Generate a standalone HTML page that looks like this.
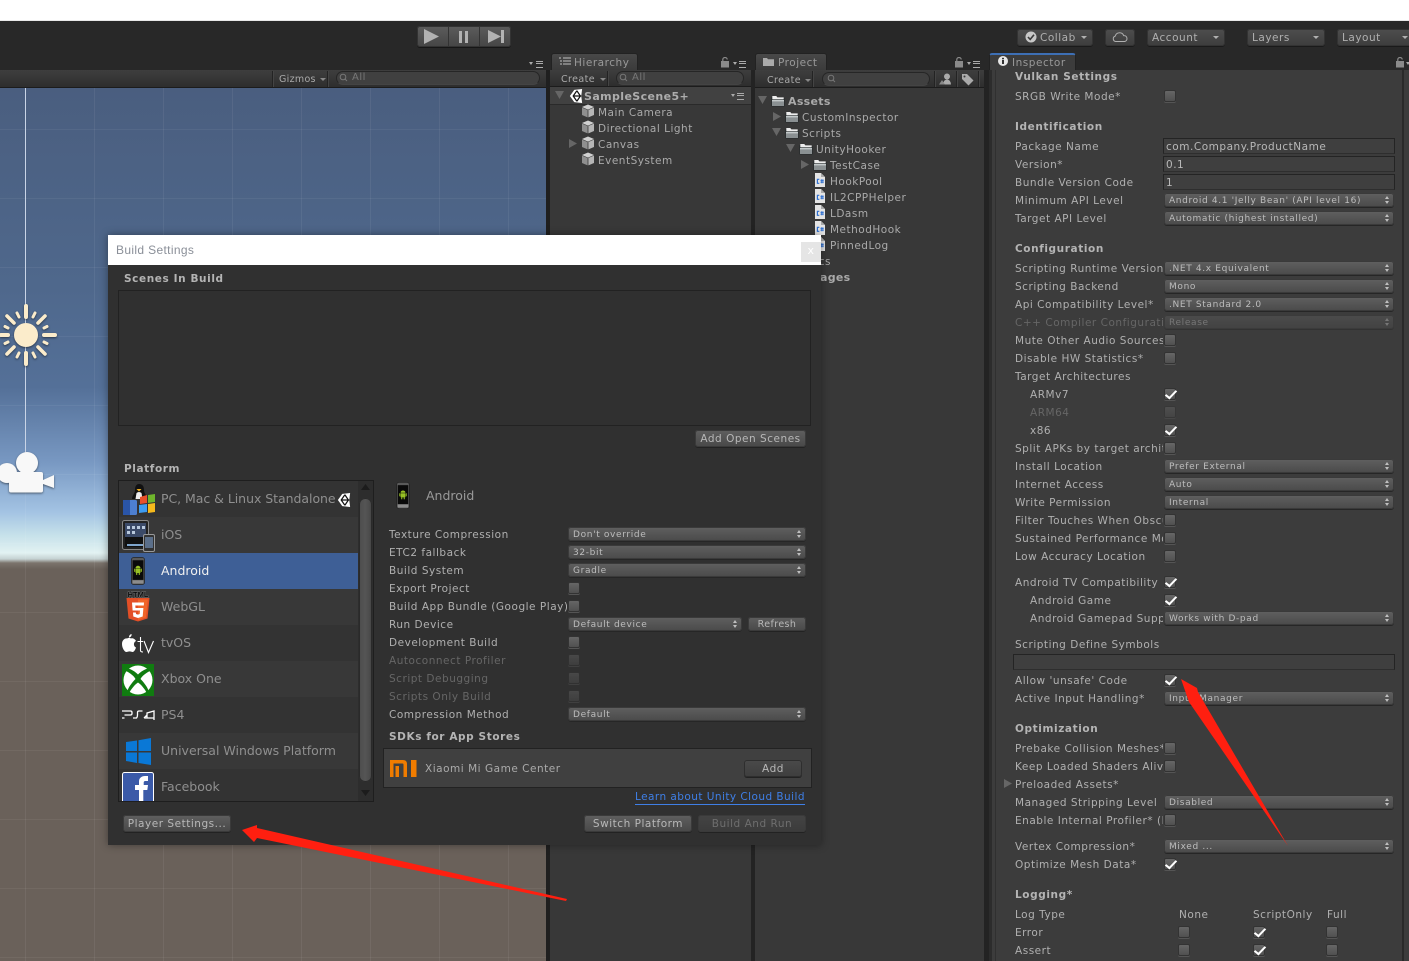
<!DOCTYPE html>
<html><head><meta charset="utf-8"><title>Build Settings</title>
<style>
html,body{margin:0;padding:0;width:1409px;height:961px;overflow:hidden;background:#282828}
body{position:relative;font:10.5px/16px "DejaVu Sans","Liberation Sans",sans-serif;color:#b0b0b0;letter-spacing:.52px}
div,svg,a{position:absolute}
.l,.b,.s{white-space:nowrap;height:16px;margin-top:1px}
.b{font-weight:bold;font-size:10.5px;color:#b4b4b4;letter-spacing:.6px}
.c{width:148px;overflow:hidden}
.ci{width:133px;overflow:hidden}
.dis{color:#666}
.dd{height:14px;border-radius:3px;background:linear-gradient(#606060,#4a4a4a);box-shadow:0 1px 0 #262626,inset 0 0 0 1px #3a3a3a;font-size:9px;line-height:16px;color:#bdbdbd;padding-left:5px;box-sizing:border-box;white-space:nowrap;letter-spacing:.65px}
.dd::before,.dd::after{content:"";position:absolute;right:5px;border-left:2.5px solid transparent;border-right:2.5px solid transparent}
.dd::before{top:3px;border-bottom:3px solid #c0c0c0}
.dd::after{top:8px;border-top:3px solid #c0c0c0}
.ddo{opacity:.45}
.i{left:1164px;width:230px}
.g{left:568px;width:238px}
.cb{width:12px;height:12px;box-sizing:border-box;border-radius:2px;background:linear-gradient(#666,#505050);border:1px solid #333;box-shadow:0 1px 0 #555}
.cd{opacity:.45}
.ck{margin-top:-1px}
.ck::after{content:"";position:absolute;left:3px;top:-1px;width:4px;height:9px;border-right:2.4px solid #fff;border-bottom:2.4px solid #fff;transform:rotate(38deg) skewX(-6deg)}
.tf{left:1163px;width:232px;height:16px;box-sizing:border-box;background:#3f3f3f;border:1px solid #242424;border-bottom-color:#2e2e2e;padding-left:2px;line-height:16px;color:#b8b8b8}
.btn{height:17px;box-sizing:border-box;border-radius:3px;background:linear-gradient(#5f5f5f,#484848);box-shadow:0 1px 0 #222,inset 0 0 0 1px #3a3a3a;text-align:center;line-height:18px;color:#b8b8b8;white-space:nowrap}
.tb{height:17px;top:29px;box-sizing:border-box;border-radius:3px;background:linear-gradient(#4e4e4e,#3d3d3d);box-shadow:0 1px 0 #1a1a1a,inset 0 0 0 1px #333;line-height:18px;padding-left:5px;color:#b0b0b0;white-space:nowrap}
.ar{width:0;height:0;border-left:3px solid transparent;border-right:3px solid transparent;border-top:3px solid #b0b0b0}
.tool{background:linear-gradient(#3e3e3e,#2e2e2e);border-bottom:1px solid #1c1c1c;box-sizing:border-box}
.sp{width:1px;background:#232323;box-shadow:1px 0 0 #444}
.pill{height:14px;border-radius:7px;background:#404040;border:1px solid #262626;box-sizing:border-box;color:#777;font-size:10px;line-height:12px;border-bottom-color:#444}
.tab{top:53px;height:17px;box-sizing:border-box;border-radius:3px 3px 0 0;background:linear-gradient(#484848,#3b3b3b);border:1px solid #222;border-bottom:0;color:#999;line-height:18px;white-space:nowrap}
.m{width:7px;height:5px;border-top:1px solid #aaa;border-bottom:1px solid #aaa}
.m::after{content:"";position:absolute;left:0;right:0;top:1px;height:1px;background:#aaa;box-shadow:0 0 0 #aaa}
.mt{width:0;height:0;border-left:2.5px solid transparent;border-right:2.5px solid transparent;border-top:3px solid #aaa}
.row{left:119px;width:239px;height:36px}
.pt{left:161px;font-size:12.5px;line-height:18px;color:#8f8f8f;white-space:nowrap;height:18px;letter-spacing:0}
.tree{color:#aaa;letter-spacing:.5px}
</style></head><body>
<svg width="0" height="0" style="left:0;top:0"><defs>
<symbol id="cube" viewBox="0 0 14 14"><path d="M7 .5 13 3 7 5.6 1 3z" fill="#d0d0d0"/><path d="M1 3.600 6.600 6v7.400L1 11z" fill="#8f8f8f"/><path d="M13 3.600 7.400 6v7.400L13 11z" fill="#b5b5b5"/></symbol>
<symbol id="fold" viewBox="0 0 14 12"><path d="M.5 2.200h5l1 1.200h7v8h-13z" fill="#1e2426"/><path d="M1.300 1h4l1 1.400h6.400v2H1.300z" fill="#eee"/><path d="M1 5h12v6H1z" fill="#8a9092"/><path d="M1 5h12v1.400H1z" fill="#c3c9ca"/></symbol>
<symbol id="cs" viewBox="0 0 10 14"><path d="M0 0h6l4 4v10H0z" fill="#e4e4e4"/><path d="M6 0l4 4H6z" fill="#aaa"/><rect x="0" y="4.500" width="9" height="7.500" fill="#e4e4e4"/><path d="M4.300 6.300H2.400v4h1.900" fill="none" stroke="#2e6fd0" stroke-width="1.200"/><path d="M5.500 7.600h3.200M5.500 9.200h3.200M6.300 6.300v4M7.900 6.300v4" stroke="#2e6fd0" stroke-width=".9"/></symbol>
<symbol id="unity" viewBox="0 0 16 16"><path d="M1 8 6 1l9-1-1 8 1 8-9-1z" fill="#fff"/><path d="M9 2 4.800 8l4.200 6M9 8h5M4.800 8H9M9 2l4 6-4 6" fill="none" stroke="#111" stroke-width="1.400"/></symbol>
<symbol id="droid" viewBox="0 0 16 30"><rect x="1" y=".5" width="14" height="29" rx="2.500" fill="#5a5a5a" stroke="#222" stroke-width=".8"/><rect x="2.200" y="3.500" width="11.600" height="21" fill="#0a0a0a"/><rect x="2.200" y="25" width="11.600" height="3.400" fill="#8c8c8c"/><path d="M5.300 12a2.700 2.600 0 0 1 5.400 0z" fill="#97c024"/><rect x="5.300" y="12.500" width="5.400" height="4.600" rx=".6" fill="#97c024"/><rect x="3.900" y="12.500" width="1" height="3.400" fill="#97c024"/><rect x="11.100" y="12.500" width="1" height="3.400" fill="#97c024"/><rect x="6" y="17" width="1.200" height="2.200" fill="#97c024"/><rect x="8.800" y="17" width="1.200" height="2.200" fill="#97c024"/></symbol>
</defs></svg>

<!-- top strip -->
<div style="left:0;top:0;width:1409px;height:20px;background:#fff"></div>
<div style="left:0;top:20px;width:1409px;height:1px;background:#e8e8e8"></div>

<!-- play buttons -->
<div style="left:417px;top:26px;width:94px;height:21px;border-radius:3px;background:linear-gradient(#5c5c5c,#454545);box-shadow:0 1px 0 #161616,inset 0 0 0 1px #333"></div>
<div style="left:448px;top:27px;width:1px;height:20px;background:#333"></div>
<div style="left:479px;top:27px;width:1px;height:20px;background:#333"></div>
<svg style="left:417px;top:26px" width="94" height="21"><path d="M7 3 22 10.500 7 18z" fill="#b2b2b2"/><path d="M42 5h3v12h-3zM48 5h3v12h-3z" fill="#b2b2b2"/><path d="M71 4 84 10.500 71 17z" fill="#b2b2b2"/><rect x="84" y="4" width="3" height="13" fill="#b2b2b2"/></svg>

<!-- right toolbar -->
<div class="tb" style="left:1017px;width:76px;padding-left:23px">Collab</div>
<svg style="left:1025px;top:31px" width="12" height="12"><circle cx="6" cy="6" r="5.500" fill="#c8c8c8"/><path d="M3 6l2.200 2.400L9 3.800" fill="none" stroke="#3c3c3c" stroke-width="1.600"/></svg>
<div class="ar" style="left:1081px;top:36px"></div>
<div class="tb" style="left:1105px;width:30px"></div>
<svg style="left:1112px;top:31px" width="16" height="12"><path d="M3.500 10.500a2.800 2.800 0 0 1-.3-5.400 4.500 4.500 0 0 1 8.500-.5 3 3 0 0 1 1 5.900z" fill="none" stroke="#b0b0b0"/></svg>
<div class="tb" style="left:1147px;width:78px">Account</div><div class="ar" style="left:1213px;top:36px"></div>
<div class="tb" style="left:1247px;width:78px">Layers</div><div class="ar" style="left:1313px;top:36px"></div>
<div class="tb" style="left:1337px;width:78px">Layout</div><div class="ar" style="left:1402px;top:36px"></div>

<!-- scene view -->
<div style="left:0;top:87px;width:546px;height:874px;overflow:hidden;background:linear-gradient(#4a5e7f 0,#4f688c 200px,#547098 300px,#7898c2 375px,#a3c3e3 425px,#c6e1ea 448px,#e2f2f2 466px,#c5d2d2 472px,#7b736c 476px,#6a615a 482px)">
<div style="left:0;top:0;width:546px;height:874px;background-image:linear-gradient(90deg,rgba(255,255,255,.06) 1px,transparent 1px),linear-gradient(rgba(255,255,255,.05) 1px,transparent 1px);background-size:69px 69px;background-position:25px 42px"></div>
<div style="left:25px;top:0;width:1px;height:385px;background:#c9d4e6"></div>
</div>
<svg style="left:0;top:300px;filter:drop-shadow(0 1px 1px rgba(0,0,0,.5))" width="60" height="70"><g fill="#fbeccb" stroke="#fbeccb" stroke-linecap="round"><circle cx="26" cy="35" r="11.500"/><g stroke-width="4"><path d="M26 17V6M26 53v11M8 35H1M44 35H55"/></g><g stroke-width="3.600"><path d="M14 23 7 16M38 23 45 16M14 47 7 54M38 47 45 54"/></g><g stroke-width="3"><path d="M19 17 17 13M33 17 35 13M19 53 17 57M33 53 35 57M8 28 5 26.500M44 28 47 26.500M8 42 5 43.500M44 42 47 43.500"/></g></g></svg>
<svg style="left:0;top:450px;filter:drop-shadow(0 1px 1px rgba(0,0,0,.5))" width="58" height="46"><g fill="#f8f8f8"><circle cx="27" cy="13" r="11"/><circle cx="7" cy="23" r="10"/><rect x="9" y="22" width="34" height="20.500" rx="2"/><path d="M43 30 54 25V38L43 34z"/></g></svg>

<!-- docks -->
<div style="left:546px;top:70px;width:4px;height:891px;background:#1f1f1f"></div>
<div style="left:550px;top:70px;width:201px;height:891px;background:#383838"></div>
<div style="left:751px;top:70px;width:4px;height:891px;background:#232323"></div>
<div style="left:755px;top:70px;width:229px;height:891px;background:#383838"></div>
<div style="left:984px;top:70px;width:5px;height:891px;background:#232323"></div>
<div style="left:989px;top:70px;width:420px;height:891px;background:#3c3c3c"></div>
<div style="left:989px;top:70px;width:3px;height:891px;background:#2c2c2c"></div>
<div style="left:995px;top:70px;width:1px;height:891px;background:#303030"></div>
<div style="left:1402px;top:70px;width:2px;height:891px;background:#2a2a2a"></div>

<!-- scene toolbar -->
<div class="tool" style="left:0;top:70px;width:546px;height:18px"></div>
<div class="sp" style="left:272px;top:71px;height:16px"></div><div class="sp" style="left:327px;top:71px;height:16px"></div>
<div class="s" style="left:279px;top:71px;font-size:9.500px;color:#aaa;letter-spacing:.3px">Gizmos</div><div class="ar" style="left:320px;top:78px;border-top-color:#888"></div>
<div class="pill" style="left:336px;top:71px;width:204px;padding-left:15px">All</div>
<div class="mt" style="left:529px;top:62px"></div><div class="m" style="left:536px;top:61px"></div>

<!-- hierarchy -->
<div class="tab" style="left:551px;width:87px;padding-left:22px">Hierarchy</div>
<svg style="left:559px;top:57px" width="12" height="9"><path d="M0 1h2M4 1h8M1 4h2M4 4h8M1 7h2M4 7h8" stroke="#c0c0c0"/></svg>
<svg style="left:721px;top:57px" width="9" height="11"><rect x="0" y="4" width="8" height="6.500" fill="#8a8a8a"/><path d="M1.800 4V2.500a2.200 2 0 0 1 4.400 0" fill="none" stroke="#8a8a8a" stroke-width="1.200"/></svg>
<div class="mt" style="left:733px;top:62px"></div><div class="m" style="left:739px;top:61px"></div>
<div class="tool" style="left:550px;top:70px;width:201px;height:17px"></div>
<div class="sp" style="left:607px;top:71px;height:15px"></div>
<div class="s" style="left:561px;top:71px;font-size:9.500px;letter-spacing:.4px;color:#aaa">Create</div><div class="ar" style="left:600px;top:78px;border-top-color:#888"></div>
<div class="pill" style="left:616px;top:71px;width:128px;padding-left:15px">All</div>
<svg style="left:339px;top:73px" width="12" height="10"><circle cx="4" cy="4" r="2.800" fill="none" stroke="#777"/><path d="M6 6l2 2" stroke="#777"/></svg>
<svg style="left:619px;top:73px" width="12" height="10"><circle cx="4" cy="4" r="2.800" fill="none" stroke="#777"/><path d="M6 6l2 2" stroke="#777"/></svg>
<div style="left:550px;top:87px;width:201px;height:17px;background:#414141;border-bottom:1px solid #2a2a2a"></div>
<svg style="left:555px;top:91px" width="10" height="9"><path d="M0 0h9L4.500 8z" fill="#666"/></svg>
<svg style="left:569px;top:89px" width="14" height="14"><use href="#unity"/></svg>
<div class="b" style="left:584px;top:88px;font-size:11px;letter-spacing:.4px;color:#adadad">SampleScene5+</div>
<div class="mt" style="left:731px;top:94px"></div><div class="m" style="left:737px;top:93px"></div>
<svg style="left:581px;top:104px" width="14" height="14"><use href="#cube"/></svg><div class="l tree" style="left:598px;top:104px">Main Camera</div>
<svg style="left:581px;top:120px" width="14" height="14"><use href="#cube"/></svg><div class="l tree" style="left:598px;top:120px">Directional Light</div>
<svg style="left:569px;top:139px" width="9" height="10"><path d="M0 0 8 4.500 0 9z" fill="#666"/></svg>
<svg style="left:581px;top:136px" width="14" height="14"><use href="#cube"/></svg><div class="l tree" style="left:598px;top:136px">Canvas</div>
<svg style="left:581px;top:152px" width="14" height="14"><use href="#cube"/></svg><div class="l tree" style="left:598px;top:152px">EventSystem</div>

<!-- project -->
<div class="tab" style="left:755px;width:72px;padding-left:22px">Project</div>
<svg style="left:763px;top:57px" width="12" height="9"><path d="M0 1h4l1 1.200h6V9H0z" fill="#aaa"/></svg>
<svg style="left:955px;top:57px" width="9" height="11"><rect x="0" y="4" width="8" height="6.500" fill="#8a8a8a"/><path d="M1.800 4V2.500a2.200 2 0 0 1 4.400 0" fill="none" stroke="#8a8a8a" stroke-width="1.200"/></svg>
<div class="mt" style="left:967px;top:62px"></div><div class="m" style="left:973px;top:61px"></div>
<div class="tool" style="left:755px;top:70px;width:229px;height:18px"></div>
<div class="sp" style="left:812px;top:71px;height:16px"></div><div class="sp" style="left:934px;top:71px;height:16px"></div><div class="sp" style="left:956px;top:71px;height:16px"></div><div class="sp" style="left:978px;top:71px;height:16px"></div>
<div class="s" style="left:767px;top:72px;font-size:9.500px;letter-spacing:.4px;color:#aaa">Create</div><div class="ar" style="left:805px;top:79px;border-top-color:#888"></div>
<div class="pill" style="left:822px;top:72px;width:108px"></div>
<svg style="left:827px;top:74px" width="12" height="10"><circle cx="4" cy="4" r="2.800" fill="none" stroke="#777"/><path d="M6 6l2 2" stroke="#777"/></svg>
<svg style="left:939px;top:73px" width="14" height="13"><circle cx="8" cy="3.500" r="3" fill="#aaa"/><path d="M4 11.500q.5-5 4-5t4 5z" fill="#aaa"/><path d="M0 11.500 3 7l3 4.500z" fill="#888"/></svg>
<svg style="left:961px;top:73px" width="13" height="13"><path d="M1 1h5l6.500 6.500-5 5L1 6z" fill="#aaa"/><circle cx="3.500" cy="3.500" r="1" fill="#383838"/></svg>
<svg style="left:758px;top:96px" width="10" height="9"><path d="M0 0h9L4.500 8z" fill="#666"/></svg>
<svg style="left:771px;top:95px" width="14" height="12"><use href="#fold"/></svg><div class="b" style="left:788px;top:93px;font-size:11px;letter-spacing:.3px;color:#aaa">Assets</div>
<svg style="left:773px;top:112px" width="9" height="10"><path d="M0 0 8 4.500 0 9z" fill="#666"/></svg>
<svg style="left:785px;top:111px" width="14" height="12"><use href="#fold"/></svg><div class="l tree" style="left:802px;top:109px">CustomInspector</div>
<svg style="left:772px;top:128px" width="10" height="9"><path d="M0 0h9L4.500 8z" fill="#666"/></svg>
<svg style="left:785px;top:127px" width="14" height="12"><use href="#fold"/></svg><div class="l tree" style="left:802px;top:125px">Scripts</div>
<svg style="left:786px;top:144px" width="10" height="9"><path d="M0 0h9L4.500 8z" fill="#666"/></svg>
<svg style="left:799px;top:143px" width="14" height="12"><use href="#fold"/></svg><div class="l tree" style="left:816px;top:141px">UnityHooker</div>
<svg style="left:801px;top:160px" width="9" height="10"><path d="M0 0 8 4.500 0 9z" fill="#666"/></svg>
<svg style="left:813px;top:159px" width="14" height="12"><use href="#fold"/></svg><div class="l tree" style="left:830px;top:157px">TestCase</div>
<svg style="left:815px;top:173px" width="10" height="14"><use href="#cs"/></svg><div class="l tree" style="left:830px;top:173px">HookPool</div>
<svg style="left:815px;top:189px" width="10" height="14"><use href="#cs"/></svg><div class="l tree" style="left:830px;top:189px">IL2CPPHelper</div>
<svg style="left:815px;top:205px" width="10" height="14"><use href="#cs"/></svg><div class="l tree" style="left:830px;top:205px">LDasm</div>
<svg style="left:815px;top:221px" width="10" height="14"><use href="#cs"/></svg><div class="l tree" style="left:830px;top:221px">MethodHook</div>
<svg style="left:815px;top:237px" width="10" height="14"><use href="#cs"/></svg><div class="l tree" style="left:830px;top:237px">PinnedLog</div>
<div class="l tree" style="left:821px;top:253px;width:10px;overflow:hidden;direction:rtl">cs</div>
<div class="b" style="left:820px;top:269px;font-size:11px;letter-spacing:.3px;color:#aaa">ages</div>

<!-- inspector tab -->
<div class="tab" style="left:989px;width:87px;padding-left:22px;background:#3c3c3c;border-top:2px solid #3d6fb5;line-height:17px">Inspector</div>
<svg style="left:998px;top:56px" width="10" height="10"><circle cx="5" cy="5" r="5" fill="#e8e8e8"/><rect x="4" y="4" width="2" height="4" fill="#333"/><rect x="4" y="1.800" width="2" height="1.500" fill="#333"/></svg>
<svg style="left:1396px;top:57px" width="9" height="11"><rect x="0" y="4" width="8" height="6.500" fill="#8a8a8a"/><path d="M1.800 4V2.500a2.200 2 0 0 1 4.400 0" fill="none" stroke="#8a8a8a" stroke-width="1.200"/></svg>
<div class="mt" style="left:1406px;top:62px"></div>

<!-- inspector body -->
<div class="b" style="left:1015px;top:68px">Vulkan Settings</div>
<div class="l c" style="left:1015px;top:88px">SRGB Write Mode*</div><div class="cb" style="left:1164px;top:90px"></div>
<div class="b" style="left:1015px;top:118px">Identification</div>
<div class="l c" style="left:1015px;top:138px">Package Name</div><div class="tf" style="top:138px">com.Company.ProductName</div>
<div class="l c" style="left:1015px;top:156px">Version*</div><div class="tf" style="top:156px">0.1</div>
<div class="l c" style="left:1015px;top:174px">Bundle Version Code</div><div class="tf" style="top:174px">1</div>
<div class="l c" style="left:1015px;top:192px">Minimum API Level</div><div class="dd i" style="top:193px">Android 4.1 'Jelly Bean' (API level 16)</div>
<div class="l c" style="left:1015px;top:210px">Target API Level</div><div class="dd i" style="top:211px">Automatic (highest installed)</div>
<div class="b" style="left:1015px;top:240px">Configuration</div>
<div class="l c" style="left:1015px;top:260px">Scripting Runtime Version</div><div class="dd i" style="top:261px">.NET 4.x Equivalent</div>
<div class="l c" style="left:1015px;top:278px">Scripting Backend</div><div class="dd i" style="top:279px">Mono</div>
<div class="l c" style="left:1015px;top:296px">Api Compatibility Level*</div><div class="dd i" style="top:297px">.NET Standard 2.0</div>
<div class="l c dis" style="left:1015px;top:314px">C++ Compiler Configuration</div><div class="dd i ddo" style="top:315px">Release</div>
<div class="l c" style="left:1015px;top:332px">Mute Other Audio Sources</div><div class="cb" style="left:1164px;top:334px"></div>
<div class="l c" style="left:1015px;top:350px">Disable HW Statistics*</div><div class="cb" style="left:1164px;top:352px"></div>
<div class="l c" style="left:1015px;top:368px">Target Architectures</div>
<div class="l ci" style="left:1030px;top:386px">ARMv7</div><div class="cb ck" style="left:1164px;top:389px"></div>
<div class="l ci dis" style="left:1030px;top:404px">ARM64</div><div class="cb cd" style="left:1164px;top:406px"></div>
<div class="l ci" style="left:1030px;top:422px">x86</div><div class="cb ck" style="left:1164px;top:425px"></div>
<div class="l c" style="left:1015px;top:440px">Split APKs by target architecture</div><div class="cb" style="left:1164px;top:442px"></div>
<div class="l c" style="left:1015px;top:458px">Install Location</div><div class="dd i" style="top:459px">Prefer External</div>
<div class="l c" style="left:1015px;top:476px">Internet Access</div><div class="dd i" style="top:477px">Auto</div>
<div class="l c" style="left:1015px;top:494px">Write Permission</div><div class="dd i" style="top:495px">Internal</div>
<div class="l c" style="left:1015px;top:512px">Filter Touches When Obscured</div><div class="cb" style="left:1164px;top:514px"></div>
<div class="l c" style="left:1015px;top:530px">Sustained Performance Mode</div><div class="cb" style="left:1164px;top:532px"></div>
<div class="l c" style="left:1015px;top:548px">Low Accuracy Location</div><div class="cb" style="left:1164px;top:550px"></div>
<div class="l c" style="left:1015px;top:574px">Android TV Compatibility</div><div class="cb ck" style="left:1164px;top:577px"></div>
<div class="l ci" style="left:1030px;top:592px">Android Game</div><div class="cb ck" style="left:1164px;top:595px"></div>
<div class="l ci" style="left:1030px;top:610px">Android Gamepad Support</div><div class="dd i" style="top:611px">Works with D-pad</div>
<div class="l c" style="left:1015px;top:636px">Scripting Define Symbols</div>
<div class="tf" style="left:1013px;top:654px;width:382px"></div>
<div class="l c" style="left:1015px;top:672px">Allow 'unsafe' Code</div><div class="cb ck" style="left:1164px;top:675px"></div>
<div class="l c" style="left:1015px;top:690px">Active Input Handling*</div><div class="dd i" style="top:691px">Input Manager</div>
<div class="b" style="left:1015px;top:720px">Optimization</div>
<div class="l c" style="left:1015px;top:740px">Prebake Collision Meshes*</div><div class="cb" style="left:1164px;top:742px"></div>
<div class="l c" style="left:1015px;top:758px">Keep Loaded Shaders Alive*</div><div class="cb" style="left:1164px;top:760px"></div>
<svg style="left:1004px;top:779px" width="9" height="10"><path d="M0 0 8 4.500 0 9z" fill="#666"/></svg>
<div class="l c" style="left:1015px;top:776px">Preloaded Assets*</div>
<div class="l c" style="left:1015px;top:794px">Managed Stripping Level</div><div class="dd i" style="top:795px">Disabled</div>
<div class="l c" style="left:1015px;top:812px">Enable Internal Profiler* (Deprecated)</div><div class="cb" style="left:1164px;top:814px"></div>
<div class="l c" style="left:1015px;top:838px">Vertex Compression*</div><div class="dd i" style="top:839px">Mixed ...</div>
<div class="l c" style="left:1015px;top:856px">Optimize Mesh Data*</div><div class="cb ck" style="left:1164px;top:859px"></div>
<div class="b" style="left:1015px;top:886px">Logging*</div>
<div class="l" style="left:1015px;top:906px">Log Type</div><div class="l" style="left:1179px;top:906px">None</div><div class="l" style="left:1253px;top:906px">ScriptOnly</div><div class="l" style="left:1327px;top:906px">Full</div>
<div class="l" style="left:1015px;top:924px">Error</div><div class="cb" style="left:1178px;top:926px"></div><div class="cb ck" style="left:1253px;top:927px"></div><div class="cb" style="left:1326px;top:926px"></div>
<div class="l" style="left:1015px;top:942px">Assert</div><div class="cb" style="left:1178px;top:944px"></div><div class="cb ck" style="left:1253px;top:945px"></div><div class="cb" style="left:1326px;top:944px"></div>

<!-- build settings dialog -->
<div style="left:108px;top:235px;width:713px;height:610px;background:#303030;box-shadow:0 0 8px rgba(0,0,0,.4)"></div>
<div style="left:108px;top:235px;width:713px;height:30px;background:#fff"></div>
<div class="s" style="left:116px;top:241px;font:12px/16px 'Liberation Sans',sans-serif;color:#8a8f98;letter-spacing:.35px">Build Settings</div>
<div style="left:801px;top:242px;width:20px;height:20px;background:#e5e5e5;color:#fff;text-align:center;line-height:18px;font-size:11px">x</div>
<div class="b" style="left:124px;top:270px">Scenes In Build</div>
<div style="left:118px;top:290px;width:693px;height:136px;box-sizing:border-box;border:1px solid #222"></div>
<div class="btn" style="left:695px;top:430px;width:111px">Add Open Scenes</div>
<div class="b" style="left:124px;top:460px">Platform</div>

<!-- platform list -->
<div style="left:118px;top:480px;width:256px;height:322px;box-sizing:border-box;border:1px solid #1e1e1e;background:#333"></div>
<div class="row" style="top:481px;background:#333"></div>
<div class="row" style="top:517px;background:#383838"></div>
<div class="row" style="top:553px;background:#3e5f96"></div>
<div class="row" style="top:589px;background:#383838"></div>
<div class="row" style="top:625px;background:#333"></div>
<div class="row" style="top:661px;background:#383838"></div>
<div class="row" style="top:697px;background:#333"></div>
<div class="row" style="top:733px;background:#383838"></div>
<div class="row" style="top:769px;height:32px;background:#333"></div>
<div style="left:358px;top:481px;width:15px;height:320px;background:#2d2d2d"></div>
<svg style="left:361px;top:484px" width="9" height="6"><path d="M4.500 0 9 6H0z" fill="#1c1c1c"/></svg>
<svg style="left:361px;top:790px" width="9" height="6"><path d="M4.500 6 9 0H0z" fill="#1c1c1c"/></svg>
<div style="left:359px;top:498px;width:13px;height:284px;border-radius:6px;background:linear-gradient(90deg,#4c4c4c,#555 50%,#454545);box-shadow:inset 0 0 0 1px #2a2a2a"></div>
<div class="pt" style="top:490px;letter-spacing:-.04px">PC, Mac &amp; Linux Standalone</div>
<svg style="left:337px;top:493px" width="14" height="14"><use href="#unity"/></svg>
<div class="pt" style="top:526px">iOS</div>
<div class="pt" style="top:562px;color:#f0f0f0">Android</div>
<div class="pt" style="top:598px">WebGL</div>
<div class="pt" style="top:634px">tvOS</div>
<div class="pt" style="top:670px">Xbox One</div>
<div class="pt" style="top:706px">PS4</div>
<div class="pt" style="top:742px">Universal Windows Platform</div>
<div class="pt" style="top:778px">Facebook</div>
<!-- PC icon -->
<svg style="left:122px;top:483px" width="34" height="34"><path d="M17 1c4 0 5 3 5 6 0 4 3 5 3 9H10c0-4 3-5 3-9 0-3 1-6 4-6z" fill="#111"/><path d="M14.500 10q2.500-2 5 0l1 6h-7z" fill="#eee"/><path d="M14.500 6h5l-2.500 2.500z" fill="#f0b020"/><rect x="1" y="17" width="14" height="15" rx="1.500" fill="#4d7fd0"/><path d="M1 17h7v15H1z" fill="#2a55a8"/><path d="M18 14l7-2v8l-7 1z" fill="#e8502a"/><path d="M26 12l7-1v8l-7 1z" fill="#6fb52c"/><path d="M17 22l8-1v8l-8 1z" fill="#3e9cf0"/><path d="M26 21l7-1v9l-7 1z" fill="#f5b91c"/></svg>
<!-- iOS icon -->
<svg style="left:122px;top:520px" width="33" height="32"><rect x=".5" y=".5" width="26" height="29" rx="2" fill="#222" stroke="#888"/><rect x="3" y="3" width="21" height="24" fill="#3b4a68"/><path d="M3 17h21v10H3z" fill="#111"/><path d="M5 6h3v3H5zM10 6h3v3h-3zM15 6h3v3h-3zM20 6h3v3h-3zM5 11h3v3H5zM10 11h3v3h-3z" fill="#b9c9dd"/><path d="M5 24h18v2H5z" fill="#7fa5cc"/><rect x="21.500" y="14.500" width="11" height="17" rx="1.500" fill="#333" stroke="#999"/><rect x="23" y="17" width="8" height="11" fill="#5b6f8a"/></svg>
<svg style="left:130px;top:557px" width="16" height="28"><use href="#droid"/></svg>
<!-- html5 -->
<svg style="left:125px;top:590px" width="26" height="35"><text x="13" y="7" text-anchor="middle" font-family="Liberation Sans,sans-serif" font-weight="bold" font-size="7.500" fill="#0c0c0c" stroke="#777" stroke-width=".9" paint-order="stroke" letter-spacing="0">HTML</text><path d="M1.500 8h23l-2 20.500L13 31.500l-9.500-3z" fill="#e34f26"/><path d="M13 9.500h9.800L21 27.500l-8 2.500z" fill="#f06529"/><path d="M19 12.500H7l.6 8h7.400l-.3 3.500-1.700.6-2-.6-.1-1.500H8l.3 4 4.700 1.500 4.700-1.500.7-8.500H10.500l-.2-2.500h8.500z" fill="#fff"/></svg>
<!-- apple tv -->
<svg style="left:122px;top:634px" width="34" height="22"><path d="M9 4.500C7.500 3.500 6 4 5 4.500 3 4 0 6 0 10c0 4 2.500 8 4.500 8 1 0 1.500-.6 3-.6s2 .6 3 .6c1.500 0 3-2.500 3.500-4.500-2.500-1-3-5 0-6.500C13 5 10.500 3.800 9 4.500zM9.500 0C8 .3 6.800 1.800 7 3.500 8.500 3.400 10 1.800 9.500 0z" fill="#fff"/><path d="M18.500 3v13.500q0 1.500 2.500 1.500M15.500 7.500h5.500M22 7l4.500 11.500L31.500 7" fill="none" stroke="#fff" stroke-width="1.100"/></svg>
<!-- xbox -->
<svg style="left:122px;top:664px" width="32" height="32"><rect width="32" height="32" fill="#107c10"/><circle cx="16" cy="16" r="14.500" fill="#fff"/><path d="M16 10.500C13 7.500 9 5 6 4.500L4 7C8 9 12 12 13.500 15 9.500 19 6 24 5 28L7 29.500C9 25 13 20.500 16 18.500 19 20.500 23 25 25 29.500L27 28C26 24 22.500 19 18.500 15 20 12 24 9 28 7L26 4.500C23 5 19 7.500 16 10.500z" fill="#107c10"/></svg>
<!-- ps4 -->
<svg style="left:122px;top:710px" width="34" height="10"><path d="M0 1h8.500q1.500 0 1.500 1.500v1q0 1.500-1.500 1.500H2.500M0 8h2.500M11 8h3.500q1-1 1-3V2.500q0-1.500 1.500-1.500h3.500M22 8h10M25 8V3L32 1v9M25 5l-3 3" fill="none" stroke="#fff" stroke-width="1.300"/></svg>
<!-- windows -->
<svg style="left:126px;top:738px" width="26" height="27"><path d="M0 4l11-1.500V13H0zM12.500 2.200 25 0v13H12.500zM0 14.500h11V25L0 23zM12.500 14.500H25V27l-12.500-2z" fill="#0a78d6"/></svg>
<!-- facebook -->
<div style="left:122px;top:772px;width:32px;height:29px;overflow:hidden"><svg style="left:0;top:0" width="32" height="32"><rect x=".5" y=".5" width="31" height="34" rx="2" fill="#3b5aa8" stroke="#fff"/><path d="M17 32V18h-4v-5h4v-3.500C17 6 19.500 4 23 4h3v5h-2.500c-1.500 0-1.800.8-1.800 2v2H26l-.7 5h-4V32z" fill="#fff"/></svg></div>

<!-- android settings -->
<svg style="left:395px;top:482px" width="16" height="27"><use href="#droid"/></svg>
<div class="s" style="left:426px;top:487px;font-size:12.500px;color:#999;letter-spacing:0">Android</div>
<div class="l" style="left:389px;top:526px">Texture Compression</div><div class="dd g" style="top:527px">Don't override</div>
<div class="l" style="left:389px;top:544px">ETC2 fallback</div><div class="dd g" style="top:545px">32-bit</div>
<div class="l" style="left:389px;top:562px">Build System</div><div class="dd g" style="top:563px">Gradle</div>
<div class="l" style="left:389px;top:580px">Export Project</div><div class="cb" style="left:568px;top:582px"></div>
<div class="l" style="left:389px;top:598px;width:178px;overflow:hidden">Build App Bundle (Google Play)</div><div class="cb" style="left:568px;top:600px"></div>
<div class="l" style="left:389px;top:616px">Run Device</div><div class="dd" style="left:568px;width:174px;top:617px">Default device</div><div class="btn" style="left:748px;top:617px;width:58px;height:14px;font-size:9.500px;line-height:15px;letter-spacing:.4px">Refresh</div>
<div class="l" style="left:389px;top:634px">Development Build</div><div class="cb" style="left:568px;top:636px"></div>
<div class="l dis" style="left:389px;top:652px">Autoconnect Profiler</div><div class="cb cd" style="left:568px;top:654px"></div>
<div class="l dis" style="left:389px;top:670px">Script Debugging</div><div class="cb cd" style="left:568px;top:672px"></div>
<div class="l dis" style="left:389px;top:688px">Scripts Only Build</div><div class="cb cd" style="left:568px;top:690px"></div>
<div class="l" style="left:389px;top:706px">Compression Method</div><div class="dd g" style="top:707px">Default</div>
<div class="b" style="left:389px;top:728px">SDKs for App Stores</div>
<div style="left:383px;top:748px;width:429px;height:40px;box-sizing:border-box;background:#404040;border:1px solid #222"></div>
<svg style="left:390px;top:760px" width="27" height="17"><path d="M0 0h13q4 0 4 4v13h-3.500V4.500q0-1-1-1H3.500V17H0zM5.500 6H9v11H5.500zM21 0h5.500v17H21z" fill="#f07c00"/></svg>
<div class="s" style="left:425px;top:760px;color:#aaa">Xiaomi Mi Game Center</div>
<div class="btn" style="left:744px;top:760px;width:58px;background:linear-gradient(#4a4a4a,#3e3e3e);box-shadow:0 1px 0 #222,inset 0 0 0 1px #2e2e2e">Add</div>
<div class="s" style="left:635px;top:789px;color:#3f7fe6;border-bottom:1px solid #3f7fe6;height:14px;width:170px;overflow:hidden;letter-spacing:.45px;line-height:15px">Learn about Unity Cloud Build</div>
<div class="btn" style="left:584px;top:815px;width:108px">Switch Platform</div>
<div class="btn" style="left:698px;top:815px;width:108px;background:linear-gradient(#444,#3b3b3b);color:#6e6e6e">Build And Run</div>
<div class="btn" style="left:123px;top:815px;width:108px">Player Settings...</div>

<!-- red annotation arrows -->
<svg style="left:0;top:0" width="1409" height="961"><path d="M242 830 257 825 257 828 567 899 566 901 257 838 254 842z" fill="#ff1f10"/><path d="M1181 679 1197 688 1198 692 1288 846 1189 702z" fill="#ff1f10"/></svg>
</body></html>
